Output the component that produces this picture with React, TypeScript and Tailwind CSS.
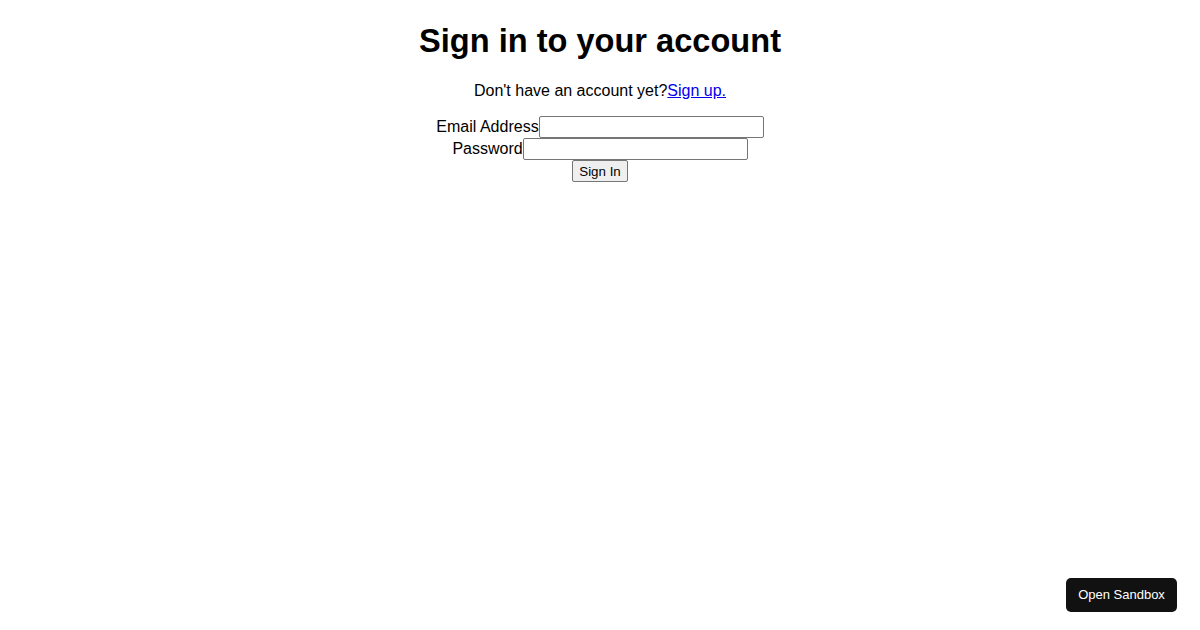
import React from "react";

export default function App() {
  return (
    <div className="min-h-[630px] bg-white text-black text-center text-[16px]" style={{ fontFamily: '"Liberation Sans", Arial, sans-serif' }}>
      <div className="pt-[22.4px]">
        <h1 className="text-[32.6px] font-bold leading-[normal] m-0">Sign in to your account</h1>
        <p className="mt-[22px] mb-[16px] leading-[normal]">
          Don't have an account yet?
          <a href="#" className="text-[#0000ee] underline">Sign up.</a>
        </p>
        <form className="leading-[normal]" onSubmit={(e) => e.preventDefault()}>
          <div>
            <label htmlFor="email">Email Address</label>
            <input
              id="email"
              type="email"
              className="inline-block w-[225px] h-[22px] border border-[#767676] rounded-[2px] px-[2px] py-[1px] text-[13.333px] bg-white align-baseline"
            />
          </div>
          <div>
            <label htmlFor="password">Password</label>
            <input
              id="password"
              type="password"
              className="inline-block w-[225px] h-[22px] border border-[#767676] rounded-[2px] px-[2px] py-[1px] text-[13.333px] bg-white align-baseline"
            />
          </div>
          <button
            type="submit"
            className="inline-block w-[56px] h-[22px] border border-[#767676] rounded-[2px] bg-[#efefef] px-[6px] py-[1px] text-[13.333px] leading-[normal]"
          >
            Sign In
          </button>
        </form>
      </div>
      <button className="fixed right-[23px] bottom-[18px] w-[111px] h-[34px] rounded-[5px] bg-[#111111] text-white text-[13px]">
        Open Sandbox
      </button>
    </div>
  );
}
